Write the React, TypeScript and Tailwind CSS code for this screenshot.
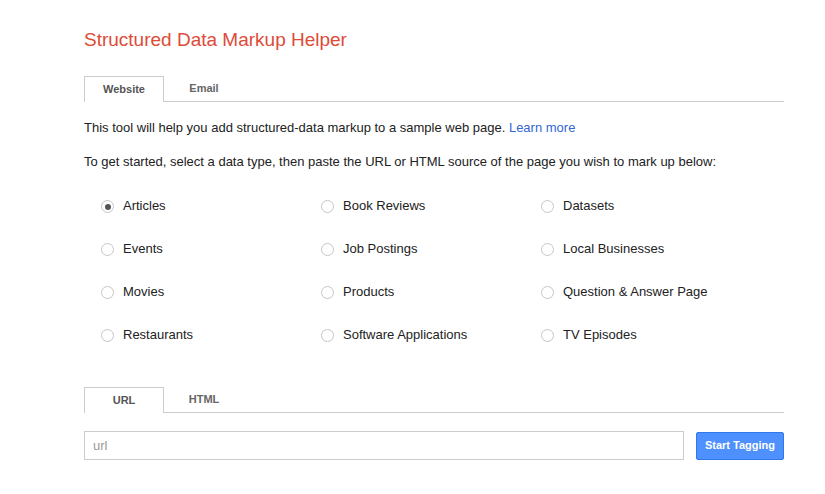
import React, { useState } from 'react';

const types = [
  'Articles', 'Book Reviews', 'Datasets',
  'Events', 'Job Postings', 'Local Businesses',
  'Movies', 'Products', 'Question & Answer Page',
  'Restaurants', 'Software Applications', 'TV Episodes',
];

const Tabs = ({ items, active, onChange }: { items: string[]; active: number; onChange: (i: number) => void }) => (
  <div className="flex h-[26px] border-b border-[#ccc]">
    {items.map((t, i) => (
      <button
        key={t}
        onClick={() => onChange(i)}
        className={
          i === active
            ? 'w-[80px] h-[26px] -mb-px bg-white border border-b-0 border-[#ccc] text-[11px] font-bold text-[#555]'
            : 'w-[80px] h-[25px] text-[11px] font-bold text-[#666]'
        }
      >
        {t}
      </button>
    ))}
  </div>
);

export default function App() {
  const [tab, setTab] = useState(0);
  const [src, setSrc] = useState(0);
  const [selected, setSelected] = useState('Articles');
  const [url, setUrl] = useState('');

  return (
    <div className="min-h-screen bg-white font-['Liberation_Sans',Arial,sans-serif] text-[#222]">
      <div className="ml-[84px] w-[700px] pt-[28px]">
        <h1 className="text-[19px] leading-[24px] text-[#dd4b39]">Structured Data Markup Helper</h1>

        <div className="mt-[24px]">
          <Tabs items={['Website', 'Email']} active={tab} onChange={setTab} />
        </div>

        <p className="mt-[17px] text-[13px] leading-[18px]">
          This tool will help you add structured-data markup to a sample web page.{' '}
          <a href="#" className="text-[#3367d6]">Learn more</a>
        </p>
        <p className="mt-[16px] text-[13px] leading-[18px]">
          To get started, select a data type, then paste the URL or HTML source of the page you wish to mark up below:
        </p>

        <div className="mt-[13px] pl-[17px] grid grid-cols-[220px_220px_220px]">
          {types.map((t) => (
            <label key={t} className="h-[43px] flex items-center gap-[9px] text-[13px] cursor-pointer">
              <span
                onClick={() => setSelected(t)}
                className="w-[13px] h-[13px] mt-[2px] rounded-full border border-[#c6c6c6] bg-white flex items-center justify-center shrink-0"
              >
                {selected === t && <span className="w-[6px] h-[6px] rounded-full bg-[#555]" />}
              </span>
              <span onClick={() => setSelected(t)}>{t}</span>
            </label>
          ))}
        </div>

        <div className="mt-[31px]">
          <Tabs items={['URL', 'HTML']} active={src} onChange={setSrc} />
        </div>

        <div className="mt-[18px] flex items-center gap-[12px]">
          <input
            value={url}
            onChange={(e) => setUrl(e.target.value)}
            placeholder="url"
            className="w-[600px] h-[29px] border border-[#ccc] px-[8px] text-[13px] outline-none placeholder:text-[#999]"
          />
          <button className="w-[88px] h-[28px] rounded-[2px] bg-[#4d90fe] border border-[#3079ed] text-white text-[11px] font-bold">
            Start Tagging
          </button>
        </div>
      </div>
    </div>
  );
}
